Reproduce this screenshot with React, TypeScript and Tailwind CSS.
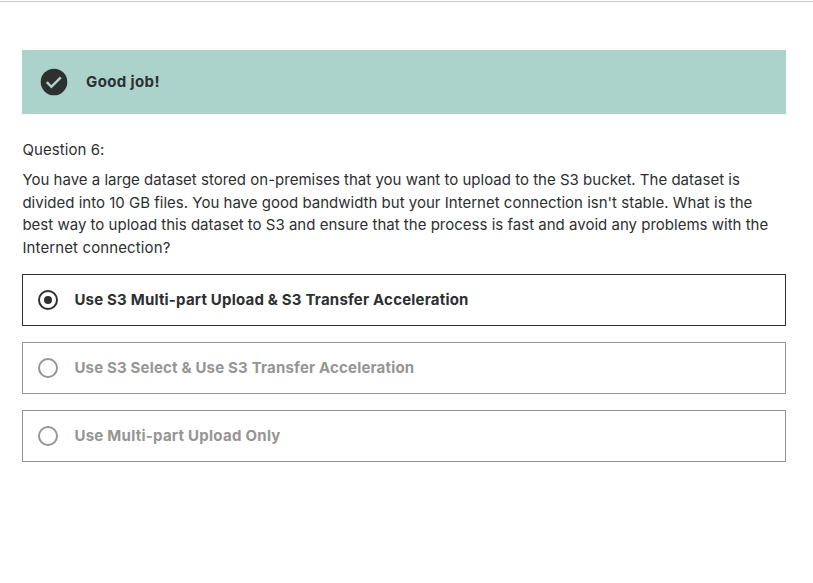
const lines = [
  { text: 'You have a large dataset stored on-premises that you want to upload to the S3 bucket. The dataset is', tracking: 'tracking-[0.01px]' },
  { text: "divided into 10 GB files. You have good bandwidth but your Internet connection isn't stable. What is the", tracking: 'tracking-[0.01px]' },
  { text: 'best way to upload this dataset to S3 and ensure that the process is fast and avoid any problems with the', tracking: 'tracking-[0.01px]' },
  { text: 'Internet connection?', tracking: 'tracking-[0.12px]' },
];

function Option({ label, tracking, selected = false }: { label: string; tracking: string; selected?: boolean }) {
  return (
    <div
      className={
        selected
          ? 'flex h-[52px] items-center border border-[#2d2f31] pl-[15px] text-[#2d2f31]'
          : 'flex h-[52px] items-center border border-[#959595] pl-[15px] text-[#959595]'
      }
    >
      <svg width="20" height="20" viewBox="0 0 20 20" fill="none" className="shrink-0">
        <circle cx="10" cy="10" r="9" stroke="currentColor" strokeWidth="2" />
        {selected && <circle cx="10" cy="10" r="4" fill="currentColor" />}
      </svg>
      <span className={`ml-[16.4px] text-[15px] leading-5 font-bold whitespace-nowrap ${tracking}`}>{label}</span>
    </div>
  );
}

export default function App() {
  return (
    <main className="h-[583px] w-[813px] overflow-hidden bg-white pt-px font-['Inter',sans-serif] text-[#2d2f31]">
      <div className="h-px bg-[#c8c8c8]" />
      <div className="pr-[27px] pl-[22px]">
        <div className="mt-12 flex h-16 items-center bg-[#acd2cc] pl-[18px]">
          <svg width="28" height="28" viewBox="0 0 28 28" fill="none">
            <circle cx="14" cy="14" r="13.3" fill="#2d2f31" />
            <path d="m6.8 14.2 4.6 4.6 9.4-9.4" stroke="#acd2cc" strokeWidth="2.5" />
          </svg>
          <span className="ml-[18px] text-[15px] font-bold tracking-[0.38px]">Good job!</span>
        </div>
        <p className="mt-6 pl-[0.4px] text-[15px] leading-6 tracking-[0.08px]">Question 6:</p>
        <div className="mt-[7px] pl-[0.4px] text-[15px] leading-[22.7px]">
          {lines.map((line) => (
            <p key={line.text} className={`whitespace-nowrap ${line.tracking}`}>{line.text}</p>
          ))}
        </div>
        <div className="mt-[14px] flex flex-col gap-4">
          <Option label="Use S3 Multi-part Upload & S3 Transfer Acceleration" tracking="tracking-[0.2px]" selected />
          <Option label="Use S3 Select & Use S3 Transfer Acceleration" tracking="tracking-[0.18px]" />
          <Option label="Use Multi-part Upload Only" tracking="tracking-[0.26px]" />
        </div>
      </div>
    </main>
  );
}
